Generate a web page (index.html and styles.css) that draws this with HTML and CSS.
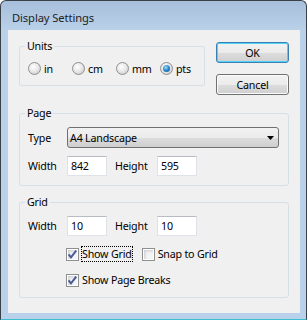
FILE: index.html
```html
<!DOCTYPE html>
<html lang="en">
<head>
  <meta charset="UTF-8">
  <title>Display Settings</title>
  <link rel="stylesheet" href="styles.css">
</head>
<body>
  <div class="window">
    <div class="titlebar">Display Settings</div>

    <div class="client">
      <!-- Units + dialog buttons -->
      <div class="top-row">
        <fieldset class="group units">
          <legend>Units</legend>
          <div class="radio-row">
            <label class="radio"><span class="radio-dot"></span>in</label>
            <label class="radio"><span class="radio-dot"></span>cm</label>
            <label class="radio"><span class="radio-dot"></span>mm</label>
            <label class="radio on"><span class="radio-dot"></span>pts</label>
          </div>
        </fieldset>
        <div class="buttons">
          <button class="btn default">OK</button>
          <button class="btn">Cancel</button>
        </div>
      </div>

      <!-- Page -->
      <fieldset class="group page">
        <legend>Page</legend>
        <div class="field-row">
          <span class="field-label">Type</span>
          <div class="combo">
            <span>A4 Landscape</span>
            <svg width="7" height="4" viewBox="0 0 7 4"><polygon points="0,0 7,0 3.5,4" fill="#000"/></svg>
          </div>
        </div>
        <div class="field-row">
          <span class="field-label">Width</span>
          <span class="textbox">842</span>
          <span class="field-label second">Height</span>
          <span class="textbox">595</span>
        </div>
      </fieldset>

      <!-- Grid -->
      <fieldset class="group grid">
        <legend>Grid</legend>
        <div class="field-row">
          <span class="field-label">Width</span>
          <span class="textbox">10</span>
          <span class="field-label second">Height</span>
          <span class="textbox">10</span>
        </div>
        <div class="check-row">
          <span class="check on">
            <svg width="11" height="11" viewBox="0 0 11 11"><path d="M1.6 5.4 L4 8.4 L9.2 1.6" fill="none" stroke="#4a5c98" stroke-width="2"/></svg>
          </span>
          <span class="check-label focus">Show Grid</span>
          <span class="check snap"></span>
          <span class="check-label">Snap to Grid</span>
        </div>
        <div class="check-row">
          <span class="check on">
            <svg width="11" height="11" viewBox="0 0 11 11"><path d="M1.6 5.4 L4 8.4 L9.2 1.6" fill="none" stroke="#4a5c98" stroke-width="2"/></svg>
          </span>
          <span class="check-label">Show Page Breaks</span>
        </div>
      </fieldset>
    </div>
  </div>
</body>
</html>
```

FILE: styles.css
```css
/* General reset */
* {
  margin: 0;
  padding: 0;
  box-sizing: border-box;
}

body {
  font-family: "Segoe UI", "Noto Sans", sans-serif;
  font-size: 10.7px;
  letter-spacing: -0.2px;
  color: #000;
  background: #fff;
}

/* Window frame */
.window {
  width: 307px;
  height: 320px;
  border: 1px solid #3a4048;
  border-bottom-color: #3cbfcf;
  border-radius: 6px 6px 0 0;
  background: linear-gradient(#a7bfdb, #bad1ea 30px, #b9d1ea);
  display: flex;
  flex-direction: column;
}

.titlebar {
  height: 29px;
  padding: 9px 0 0 11px;
  font-size: 11.2px;
  letter-spacing: -0.1px;
  line-height: 16px;
  color: #1e1e1e;
}

.client {
  height: 283px;
  margin: 0 6px 6px 7px;
  padding: 10px 0 0 11px;
  background: #f0f0f0;
}

/* Group boxes */
.group {
  border: 1px solid #d5dfe5;
  border-radius: 3px;
  padding: 0;
}

.group legend {
  margin-left: -3px;
  padding: 0 2px;
  line-height: 13px;
}

.top-row {
  display: flex;
  align-items: flex-start;
}

.units {
  width: 185px;
  padding: 9px 0 10px 8px;
}

.page,
.grid {
  width: 270px;
  padding: 7px 9px 9px 8px;
}

.page {
  margin-top: 12px;
}

.grid {
  margin-top: 10px;
}

/* Radio buttons */
.radio-row {
  display: flex;
  height: 13px;
  align-items: center;
}

.radio {
  width: 44px;
  display: flex;
  align-items: center;
  gap: 3px;
}

.radio-dot {
  width: 13px;
  height: 13px;
  border-radius: 50%;
  border: 1px solid #8e8f8f;
  background: radial-gradient(circle at 40% 35%, #fff 0, #e6e6e6 50%, #c2c2c2 100%);
  display: flex;
  align-items: center;
  justify-content: center;
}

.radio.on .radio-dot::after {
  content: "";
  width: 7px;
  height: 7px;
  border-radius: 50%;
  background: radial-gradient(circle at 40% 35%, #9ee0fb 0, #2b85c9 50%, #0d4a80 100%);
}

/* Buttons */
.buttons {
  margin: 2px 0 0 11px;
  display: flex;
  flex-direction: column;
  gap: 11px;
}

.btn {
  width: 73px;
  height: 21px;
  font-family: inherit;
  font-size: 10.7px;
  letter-spacing: -0.2px;
  color: #000;
  border: 1px solid #707070;
  border-radius: 3px;
  background: linear-gradient(#f2f2f2 0, #ebebeb 50%, #dddddd 51%, #cfcfcf 100%);
  box-shadow: inset 0 0 0 1px #fbfbfb;
}

.btn.default {
  border-color: #3c7fb1;
  box-shadow: inset 0 0 0 1px #4fd3fb;
}

/* Fields */
.field-row {
  display: flex;
  align-items: center;
}

.field-row + .field-row {
  margin-top: 8px;
}

.field-label {
  width: 39px;
}

.field-label.second {
  width: 42px;
  margin-left: 8px;
}

.combo {
  width: 212px;
  height: 21px;
  border: 1px solid #707070;
  border-radius: 3px;
  background: linear-gradient(#f2f2f2 0, #ebebeb 50%, #dddddd 51%, #cfcfcf 100%);
  display: flex;
  align-items: center;
  justify-content: space-between;
  padding: 0 4px 0 2px;
}

.textbox {
  width: 40px;
  height: 20px;
  background: #fff;
  border: 1px solid #dfe2e8;
  border-top-color: #b9bcc2;
  padding-left: 3px;
  line-height: 18px;
}

/* Check boxes */
.check-row {
  display: flex;
  align-items: center;
  height: 16px;
  margin-top: 10px;
  padding-left: 38px;
}

.check {
  width: 13px;
  height: 13px;
  border: 1px solid #8e8f8f;
  background: #f4f4f4;
  box-shadow: inset 0 0 0 1px #fff, inset 2px 2px 3px #c6cad0;
  display: flex;
  margin-right: 2px;
}

.check.snap {
  margin-left: 9px;
}

.check-label {
  height: 16px;
  line-height: 14px;
  border: 1px dotted transparent;
}

.check-label.focus {
  border-color: #000;
}
```
